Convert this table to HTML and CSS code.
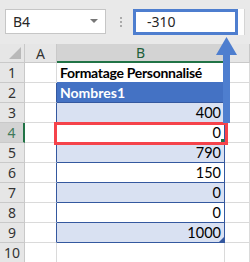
FILE: index.html
```html
<!DOCTYPE html>
<html lang="fr">
<head>
    <meta charset="UTF-8">
    <title>Formatage Personnalisé</title>
    <link rel="stylesheet" href="styles.css">
</head>
<body>
    <div class="formula-bar">
        <div class="name-box">
            <span>B4</span>
            <span class="caret"></span>
        </div>
        <div class="grip"><i></i><i></i><i></i></div>
        <div class="formula-input">-310</div>
        <div class="formula-rest"></div>
    </div>

    <div class="sheet">
        <!-- en-têtes de colonnes -->
        <div class="corner"><span class="tri"></span></div>
        <div class="col-head">A</div>
        <div class="col-head active">B</div>
        <div class="col-head"></div>

        <!-- ligne 1 : titre -->
        <div class="row-head">1</div>
        <div class="cell"></div>
        <div class="cell title">Formatage Personnalisé</div>
        <div class="cell"></div>

        <!-- ligne 2 : en-tête du tableau -->
        <div class="row-head">2</div>
        <div class="cell edge"></div>
        <div class="cell tbl th">Nombres1</div>
        <div class="cell"></div>

        <div class="row-head">3</div>
        <div class="cell edge"></div>
        <div class="cell tbl band">400</div>
        <div class="cell"></div>

        <div class="row-head active">4</div>
        <div class="cell edge"></div>
        <div class="cell tbl">0<span class="handle"></span></div>
        <div class="cell"></div>

        <div class="row-head">5</div>
        <div class="cell edge"></div>
        <div class="cell tbl band">790</div>
        <div class="cell"></div>

        <div class="row-head">6</div>
        <div class="cell edge"></div>
        <div class="cell tbl">150</div>
        <div class="cell"></div>

        <div class="row-head">7</div>
        <div class="cell edge"></div>
        <div class="cell tbl band">0</div>
        <div class="cell"></div>

        <div class="row-head">8</div>
        <div class="cell edge"></div>
        <div class="cell tbl">0</div>
        <div class="cell"></div>

        <div class="row-head">9</div>
        <div class="cell edge"></div>
        <div class="cell tbl band">1000<span class="resize"></span></div>
        <div class="cell"></div>

        <div class="row-head">10</div>
        <div class="cell"></div>
        <div class="cell"></div>
        <div class="cell"></div>
    </div>

    <!-- cadre rouge autour de B4 -->
    <div class="mark"></div>

    <!-- flèche de B4 vers la barre de formule -->
    <svg class="arrow" width="22" height="88" viewBox="0 0 22 88">
        <polygon points="10.5,0 21,18 0,18" fill="#4e7ecf"/>
        <rect x="7" y="17" width="7" height="69" fill="#4e7ecf"/>
    </svg>
</body>
</html>
```

FILE: styles.css
```css
* {
    box-sizing: border-box;
}

body {
    margin: 0;
    width: 250px;
    height: 262px;
    overflow: hidden;
    background: #fff;
    position: relative;
    font-family: "Noto Sans", "Open Sans", sans-serif;
}

/* barre de formule */
.formula-bar {
    height: 44px;
    background: #e9e9e9;
    display: flex;
    align-items: flex-start;
    padding: 9px 0 0 5px;
}

.name-box {
    width: 101px;
    height: 25px;
    background: #fff;
    border: 1px solid #c6c6c6;
    display: flex;
    align-items: center;
    justify-content: space-between;
    padding: 0 7px 0 7px;
    font-size: 14px;
    color: #262626;
}

.caret {
    width: 0;
    height: 0;
    border-left: 4px solid transparent;
    border-right: 4px solid transparent;
    border-top: 4px solid #777;
    margin-top: -2px;
}

.grip {
    width: 27px;
    height: 25px;
    display: flex;
    flex-direction: column;
    align-items: center;
    justify-content: center;
    gap: 2px;
    padding-left: 3px;
}

.grip i {
    width: 2px;
    height: 2px;
    background: #aaa;
}

.formula-input {
    width: 105px;
    height: 26px;
    background: #fff;
    border: 3px solid #4e7ecf;
    padding-left: 11px;
    font-size: 14px;
    line-height: 20px;
    color: #262626;
}

.formula-rest {
    width: 7px;
    height: 26px;
    background: #fdfdfd;
    border-right: 1px solid #d4d4d4;
}

/* grille de la feuille */
.sheet {
    display: grid;
    grid-template-columns: 25px 32px 168px 1fr;
    grid-template-rows: 19px;
    grid-auto-rows: 20px;
}

.corner,
.col-head,
.row-head {
    background: #e6e6e6;
    border-right: 1px solid #c9c9c9;
    border-bottom: 1px solid #c9c9c9;
    color: #333;
    font-size: 14px;
    display: flex;
    align-items: center;
    justify-content: center;
}

.corner {
    position: relative;
}

.corner .tri {
    position: absolute;
    right: 3px;
    bottom: 3px;
    width: 0;
    height: 0;
    border-left: 12px solid transparent;
    border-bottom: 12px solid #b9b9b9;
}

.col-head.active {
    background: #d3d3d3;
    color: #1f5f3b;
    border-bottom: 2px solid #217346;
}

.row-head.active {
    background: #d3d3d3;
    color: #3f7a5a;
    border-right: 2px solid #217346;
}

.cell {
    border-right: 1px solid #dadada;
    border-bottom: 1px solid #dadada;
    font-family: "Lato", "Liberation Sans", sans-serif;
    font-size: 14.5px;
    display: flex;
    align-items: center;
    color: #000;
    position: relative;
}

.cell.edge {
    border-right-color: #34589f;
}

.cell.title {
    font-weight: bold;
    font-size: 14px;
    padding-left: 3px;
    border-bottom-color: #4472c4;
    letter-spacing: -0.3px;
}

.cell.tbl {
    justify-content: flex-end;
    padding-right: 3px;
    border-right-color: #34589f;
    border-bottom-color: #34589f;
}

.cell.band {
    background: #d9e1f2;
}

.cell.th {
    background: #4472c4;
    color: #fff;
    font-weight: bold;
    font-size: 14px;
    justify-content: flex-start;
    padding-left: 3px;
}

.handle {
    position: absolute;
    right: 0;
    bottom: 0;
    width: 3px;
    height: 3px;
    background: #217346;
}

.resize {
    position: absolute;
    right: 0;
    bottom: 0;
    width: 0;
    height: 0;
    border-left: 5px solid transparent;
    border-bottom: 5px solid #34589f;
}

/* surlignage de la cellule sélectionnée */
.mark {
    position: absolute;
    left: 54px;
    top: 122px;
    width: 174px;
    height: 23px;
    border: 3px solid #f5434b;
}

.arrow {
    position: absolute;
    left: 216px;
    top: 37px;
}
```
